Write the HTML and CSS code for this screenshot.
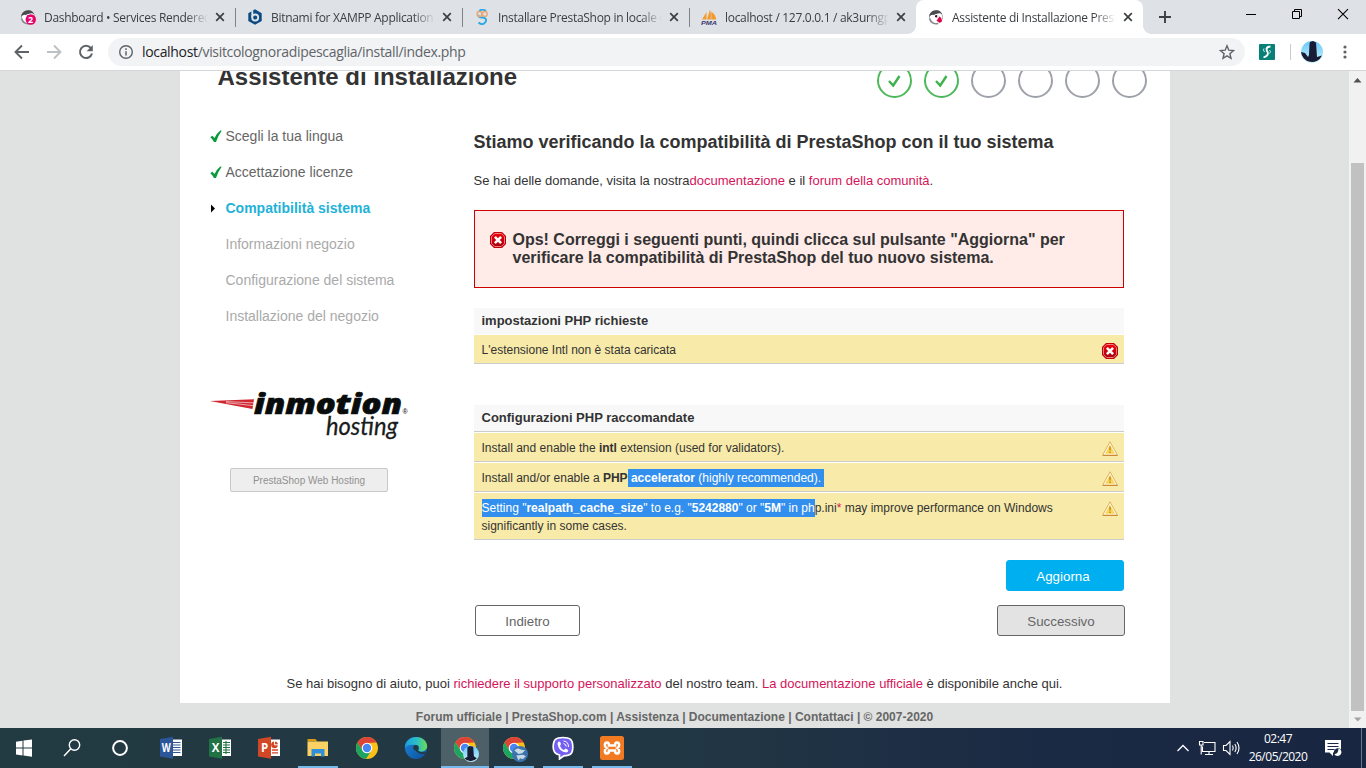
FILE: index.html
```html
<!DOCTYPE html>
<html lang="it">
<head>
<meta charset="utf-8">
<title>Assistente di Installazione PrestaShop</title>
<link rel="stylesheet" href="styles.css">
</head>
<body>
<svg width="0" height="0" class="defs">
  <defs>
    <linearGradient id="redg" x1="0" y1="0" x2="0" y2="1"><stop offset="0" stop-color="#f00008"/><stop offset="1" stop-color="#a80010"/></linearGradient>
    <linearGradient id="edgeA" x1="0" y1="0" x2="1" y2="0"><stop offset="0" stop-color="#1b9de2"/><stop offset=".55" stop-color="#2cc0c4"/><stop offset="1" stop-color="#6ddc54"/></linearGradient>
    <linearGradient id="edgeB" x1="0" y1="0" x2="1" y2="1"><stop offset="0" stop-color="#1c86d8"/><stop offset="1" stop-color="#0c4f9c"/></linearGradient>
    <linearGradient id="sky" x1="0" y1="0" x2="0" y2="1"><stop offset="0" stop-color="#6cc8f8"/><stop offset="1" stop-color="#c4f0fa"/></linearGradient>
    <symbol id="err" viewBox="0 0 16 16">
      <path d="M4 0h8l4 4v8l-4 4H4l-4-4V4z" fill="#c4000c"/>
      <path d="M4.700 1.500h6.600l3.200 3.200v6.600l-3.200 3.200H4.700l-3.200-3.200V4.700z" fill="url(#redg)" stroke="#f0a0a0" stroke-width=".8"/>
      <path d="M4.900 4.900l6.200 6.200M11.100 4.900l-6.200 6.200" stroke="#fff" stroke-width="2.600"/>
    </symbol>
    <symbol id="warn" viewBox="0 0 16 16">
      <path d="M8 1.800L15.500 15.300H.5z" fill="#fff8e0" stroke="#e0aa50" stroke-width=".9" stroke-linejoin="round"/>
      <path d="M8 4.800l4.900 8.900H3.100z" fill="#f6d758"/>
      <path d="M.8 15.400h14.700" stroke="#cc8830" stroke-width="1.100"/>
      <path d="M8 6.500v4M8 11.500v1.500" stroke="#d0952a" stroke-width="1.700"/>
    </symbol>
    <symbol id="chrome" viewBox="0 0 24 24">
      <circle cx="12" cy="12" r="11" fill="#fbc116"/>
      <path d="M2.470 6.500A11 11 0 0 1 21.530 6.500L12 7 7.670 14.500z" fill="#dc4437"/>
      <path d="M2.470 6.500A11 11 0 0 0 11 22.950L16.330 14.500 12 17 7.670 14.500z" fill="#1da462"/>
      <circle cx="12" cy="12" r="5.300" fill="#fff"/><circle cx="12" cy="12" r="4.200" fill="#4687f4"/>
    </symbol>
    <symbol id="puffin" viewBox="0 0 16 16">
      <circle cx="8" cy="8" r="6.600" fill="#fff" stroke="#a0a4a6" stroke-width=".8"/>
      <path d="M1.200 8A6.800 6.800 0 0 1 14.300 5.500C12 3.500 9 4 7 6.500 5 5 3 5.500 1.200 8z" fill="#4b4b50"/>
      <path d="M1.500 9.500A6.800 6.800 0 0 0 10 14.500" stroke="#85898c" stroke-width="1.500" fill="none"/>
      <circle cx="8" cy="7" r="2" fill="#fff"/><circle cx="8.200" cy="7.200" r="1.200" fill="#222"/>
      <path d="M9.500 6.200l3.600 2.500 1 3.500-2.200 1.500-3.500-2 1.500-1.600z" fill="#df0048"/><path d="M9 6.200l2.500 1.500-1.500 1.800z" fill="#fff"/>
    </symbol>
    <symbol id="x" viewBox="0 0 16 16"><path d="M4.200 4.200l7.600 7.600M11.800 4.200l-7.600 7.600" stroke="#3c4043" stroke-width="1.700"/></symbol>
    <symbol id="check" viewBox="0 0 12 13"><path d="M0.300 7.300L2.300 5.700 4.500 8Q7 3 10.300 .5L11.700 .8Q8.500 5 6 12H4Q2.500 9 .300 7.300z" fill="#0a9a3c"/></symbol>
  </defs>
</svg>

<header class="tabstrip">
  <div class="tab">
    <svg class="fav" viewBox="0 0 16 16"><use href="#puffin"/><circle cx="10.800" cy="10.500" r="5.200" fill="#e8006c"/><text x="8" y="14" class="badge">2</text></svg>
    <span class="title">Dashboard • Services Rendered</span><svg class="close"><use href="#x"/></svg>
  </div>
  <div class="tab sep">
    <svg class="fav" viewBox="0 0 16 16"><path d="M8 .3l6.700 3.900v7.800L8 15.700 1.300 12V4.200z" fill="#0c4a82"/><path d="M5.300 1.500V8.500" stroke="#dee1e6" stroke-width="1.900"/><circle cx="8.200" cy="8.500" r="3" fill="#0c4a82" stroke="#dee1e6" stroke-width="1.900"/></svg>
    <span class="title">Bitnami for XAMPP Applications</span><svg class="close"><use href="#x"/></svg>
  </div>
  <div class="tab sep">
    <svg class="fav" viewBox="0 0 16 16" fill="none"><path d="M12 2Q8-1 5 2.500M4 6q1 3 5 2.500 4.500 1 2.500 4.500-3 4-7 .5" stroke="#2aa8e2" stroke-width="1.900"/><circle cx="5.500" cy="5" r="2.400" stroke="#e8a878" stroke-width="1.500"/><circle cx="10.800" cy="5" r="2.400" stroke="#e8a878" stroke-width="1.500"/></svg>
    <span class="title">Installare PrestaShop in locale con</span><svg class="close"><use href="#x"/></svg>
  </div>
  <div class="tab sep">
    <svg class="fav" viewBox="0 0 16 16"><path d="M1 10.500L5.500 3v7.500zM6 10.500L9 .5Q10.500 5 9.800 10.500zM10.300 10.500V2.500q4.200 3 5 8z" fill="#f39a2c"/><text x="0" y="15.500" class="pma" textLength="16" lengthAdjust="spacingAndGlyphs">PMA</text></svg>
    <span class="title">localhost / 127.0.0.1 / ak3urngpx</span><svg class="close"><use href="#x"/></svg>
  </div>
  <div class="tab active">
    <svg class="fav"><use href="#puffin"/></svg>
    <span class="title">Assistente di Installazione PrestaShop</span><svg class="close"><use href="#x"/></svg>
  </div>
  <svg class="newtab" viewBox="0 0 16 16"><path d="M8 2v12M2 8h12" stroke="#3c4043" stroke-width="1.900"/></svg>
  <div class="winbtns">
    <svg viewBox="0 0 46 28"><path d="M18 14.500h10" stroke="#000"/></svg>
    <svg viewBox="0 0 46 28" fill="none" stroke="#000"><path d="M18.500 11.500h7v7h-7zM20.500 11.500v-2h7v7h-2"/></svg>
    <svg viewBox="0 0 46 28"><path d="M18 9.200l10 10M28 9.200l-10 10" stroke="#000" stroke-width="1.100"/></svg>
  </div>
</header>

<nav class="toolbar">
  <svg class="nav" viewBox="0 0 32 32" fill="none" stroke="#5f6368" stroke-width="1.900"><path d="M23 16H10M16 9.500L9.500 16l6.500 6.500"/></svg>
  <svg class="nav" viewBox="0 0 32 32" fill="none" stroke="#bdc1c6" stroke-width="1.900"><path d="M9 16h13M16 9.500l6.500 6.500-6.500 6.500"/></svg>
  <svg class="nav" viewBox="0 0 32 32"><path d="M20.800 12A6.100 6.100 0 1 0 22 17.500" fill="none" stroke="#5f6368" stroke-width="2"/><path d="M22.800 9v6.200h-6.200z" fill="#5f6368"/></svg>
  <div class="omni">
    <svg class="info" viewBox="0 0 16 16" fill="none" stroke="#5f6368"><circle cx="8" cy="8" r="6.300" stroke-width="1.400"/><path d="M8 7.200v4.300M8 4.200v1.700" stroke-width="1.500"/></svg>
    <span class="url"><b>localhost</b>/visitcolognoradipescaglia/install/index.php</span>
    <svg class="star" viewBox="0 0 16 16"><path d="M8 1.800l1.800 4.400 4.700.4-3.600 3.100 1.100 4.600-4-2.500-4 2.500 1.100-4.600L1.500 6.600l4.700-.4z" fill="none" stroke="#5f6368" stroke-width="1.400"/></svg>
  </div>
  <svg class="ext" viewBox="0 0 16 16"><rect width="16" height="16" rx="1" fill="#078076"/><path d="M11.500 2.500Q8 2.500 7.500 5q0 1.500 1.300 3.500 1 3-4.300 5" fill="none" stroke="#fff" stroke-width="1.800"/><path d="M5 4.500q-1.500 1 .5 3.500M10.500 6q2 1.500 0 3.500" stroke="#cfe9e5" fill="none"/></svg>
  <i class="vsep"></i>
  <svg class="avatar" viewBox="0 0 22 22"><circle cx="11" cy="11" r="11" fill="url(#sky)"/><path d="M8.500 3l.5-2 3-1 3 1.500 1 14.500 5-1.500A11 11 0 0 1 0 11l4 1 3 4 1-2z" fill="#181c34"/></svg>
  <svg class="dots" viewBox="0 0 16 16" fill="#5f6368"><circle cx="8" cy="3" r="1.600"/><circle cx="8" cy="8" r="1.600"/><circle cx="8" cy="13" r="1.600"/></svg>
</nav>

<div class="viewport">
  <div class="page">
    <div class="sheet">
      <div class="head">
        <h1>Assistente di installazione</h1>
        <div class="steps">
          <i class="done"><svg viewBox="0 0 35 35"><path d="M12 18l4.200 4.500L22.500 13" fill="none" stroke="#3fb24f" stroke-width="2.400"/></svg></i>
          <i class="done"><svg viewBox="0 0 35 35"><path d="M12 18l4.200 4.500L22.500 13" fill="none" stroke="#3fb24f" stroke-width="2.400"/></svg></i>
          <i></i><i></i><i></i><i></i>
        </div>
      </div>
      <div class="cols">
        <aside>
          <ol>
            <li><svg><use href="#check"/></svg><span>Scegli la tua lingua</span></li>
            <li><svg><use href="#check"/></svg><span>Accettazione licenze</span></li>
            <li class="current"><svg viewBox="0 0 12 13"><path d="M1 2.500v8l4-4z"/></svg><span>Compatibilità sistema</span></li>
            <li class="todo"><span>Informazioni negozio</span></li>
            <li class="todo"><span>Configurazione del sistema</span></li>
            <li class="todo"><span>Installazione del negozio</span></li>
          </ol>
          <svg class="logo" viewBox="0 0 200 56">
            <path d="M0 13L44 11.300 42.500 21z" fill="#cf2630"/><path d="M16 13.600l28 1.300M16 14.700l28 3" stroke="#fff" stroke-width=".6"/>
            <text x="44" y="26" class="inmo" textLength="148" lengthAdjust="spacingAndGlyphs">inmotion</text>
            <text x="116" y="47" class="host" textLength="72" lengthAdjust="spacingAndGlyphs">hosting</text>
            <text x="192.500" y="26" class="reg">®</text>
          </svg>
          <a class="hostbtn">PrestaShop Web Hosting</a>
        </aside>
        <main>
          <h2>Stiamo verificando la compatibilità di PrestaShop con il tuo sistema</h2>
          <p class="intro">Se hai delle domande, visita la nostra<a>documentazione</a> e il <a>forum della comunità</a>.</p>
          <div class="error"><svg><use href="#err"/></svg><p>Ops! Correggi i seguenti punti, quindi clicca sul pulsante "Aggiorna" per<br>verificare la compatibilità di PrestaShop del tuo nuovo sistema.</p></div>
          <h3 class="first">impostazioni PHP richieste</h3>
          <div class="row last"><span>L'estensione Intl non è stata caricata</span><svg><use href="#err"/></svg></div>
          <h3 class="lined">Configurazioni PHP raccomandate</h3>
          <div class="row"><span>Install and enable the <b>intl</b> extension (used for validators).</span><svg><use href="#warn"/></svg></div>
          <div class="row"><span>Install and/or enable a <b>PHP</b><mark><b>&nbsp;accelerator</b> (highly recommended).</mark></span><svg><use href="#warn"/></svg></div>
          <div class="row tall"><span><mark>Setting "<b>realpath_cache_size</b>" to e.g. "<b>5242880</b>" or "<b>5M</b>" in ph</mark>p.ini<a>*</a> may improve performance on Windows<br>significantly in some cases.</span><svg><use href="#warn"/></svg></div>
          <div class="refresh"><button class="blue">Aggiorna</button></div>
          <div class="pager"><button class="back">Indietro</button><button class="next">Successivo</button></div>
        </main>
      </div>
      <p class="help">Se hai bisogno di aiuto, puoi <a>richiedere il supporto personalizzato</a> del nostro team. <a>La documentazione ufficiale</a> è disponibile anche qui.</p>
    </div>
    <footer>Forum ufficiale | PrestaShop.com | Assistenza | Documentazione | Contattaci | © 2007-2020</footer>
  </div>
  <div class="scroll">
    <svg viewBox="0 0 17 17"><path d="M4.500 11.500h8L8.500 7z" fill="#505050"/></svg>
    <i></i>
    <svg viewBox="0 0 17 17"><path d="M5 6.500h7.500l-3.700 4z" fill="#a3a3a3"/></svg>
  </div>
</div>

<div class="taskbar">
  <div class="cell"><svg viewBox="0 0 24 24" fill="#fff"><path d="M4 5.700l6.500-1v6.800H4zM11.500 4.500L20 3.500v8h-8.500zM4 12.500h6.500v6.900L4 18.500zM11.500 12.500H20v8.200l-8.500-1.200z"/></svg></div>
  <div class="cell"><svg viewBox="0 0 24 24" fill="none" stroke="#fff" stroke-width="1.400"><circle cx="14.500" cy="9" r="5.200"/><path d="M10.800 12.800L4 20"/></svg></div>
  <div class="cell cortana"><svg viewBox="0 0 24 24" fill="none" stroke="#fff" stroke-width="2"><circle cx="12" cy="12" r="6.900"/></svg></div>
  <div class="cell"><svg viewBox="0 0 24 24"><path d="M12 3.500h11v16.500H12z" fill="#fff"/><path d="M14 6.500h7.500M14 9h7.500M14 11.500h7.500M14 14h7.500M14 16.500h7.500" stroke="#2b579a" stroke-width="1.100"/><path d="M1 3L14 .8v22L1 20.600z" fill="#2b579a"/><text x="2.800" y="15.500" class="office" textLength="9" lengthAdjust="spacingAndGlyphs">W</text></svg></div>
  <div class="cell"><svg viewBox="0 0 24 24"><path d="M12 3.500h11v16.500H12z" fill="#fff"/><path d="M15 6.500h7M15 9h7M15 11.500h7M15 14h7M15 16.500h7M18 5v13" stroke="#217346" stroke-width="1.100"/><path d="M1 3L14 .8v22L1 20.600z" fill="#217346"/><text x="3.800" y="15.500" class="office">X</text></svg></div>
  <div class="cell"><svg viewBox="0 0 24 24"><path d="M12 3.500h11v16.500H12z" fill="#fff"/><path d="M15 14h6M15 16.800h6" stroke="#d24726" stroke-width="1.300"/><circle cx="17.500" cy="8.800" r="3.400" fill="#d24726"/><path d="M17.500 8.800V5M17.500 8.800H21" stroke="#fff"/><path d="M1 3L14 .8v22L1 20.600z" fill="#d24726"/><text x="4" y="15.500" class="office">P</text></svg></div>
  <div class="cell run"><svg viewBox="0 0 24 24"><path d="M1.500 3h8l2 2.500h-10z" fill="#d89a10"/><path d="M1.500 5.500h20.500V20H1.500z" fill="#fbd163"/><path d="M5.500 13h13v7.500h-3.500v-3h-6v3H5.500z" fill="#2f8fdb"/></svg></div>
  <div class="cell"><svg><use href="#chrome"/></svg></div>
  <div class="cell"><svg viewBox="0 0 24 24"><circle cx="12" cy="12" r="11" fill="url(#edgeB)"/><path d="M.8 12C1 4.500 6.500 1 12 1c7 0 11.500 5 11.200 9.800-.4 4-5 6-9 4.200 2-2.500.8-5.500-2-6-5-.6-9.400-.5-11.400 3z" fill="url(#edgeA)"/><path d="M12 13.500q2.500 4.300 9.500 3.500" stroke="#223942" stroke-width="1.800" fill="none"/><circle cx="11.800" cy="11.700" r="2.600" fill="#223942"/></svg></div>
  <div class="cell run on"><svg viewBox="0 0 24 24"><use href="#chrome"/></svg><svg class="mini" viewBox="0 0 22 22"><circle cx="11" cy="11" r="11" fill="url(#sky)"/><path d="M6 2l3-2 5 1 1 13 4 3A11 11 0 0 1 2 17l4-2z" fill="#181c34"/></svg></div>
  <div class="cell run"><svg viewBox="0 0 24 24"><use href="#chrome"/></svg><svg class="mini" viewBox="0 0 22 22"><circle cx="11" cy="11" r="11" fill="#3d73ad"/><path d="M3 6l5-3 5 2 5 1-4 4-5 1zM6 13l9-1 4 2-4 4-4-1-2 3z" fill="#c8d9e6"/></svg></div>
  <div class="cell run"><svg viewBox="0 0 24 24"><path d="M12 1.500c7 0 9.800 2 9.800 9.500s-3 8.800-9 8.800L8.500 23v-4C4 18 2.200 16 2.200 11 2.200 3.500 5 1.500 12 1.500z" fill="#7360f2" stroke="#fff" stroke-width="1.700"/><path d="M7 6q2-1.500 3 2l-1 2q1 3 4 4l1.500-1.500q5 2 1 4Q8 16 6.500 8z" fill="#fff"/><path d="M12.500 5q5 .5 5 6M12.500 7.500q2.500.5 2.700 3" stroke="#fff" fill="none"/></svg></div>
  <div class="cell run"><svg viewBox="0 0 24 24"><rect width="24" height="24" rx="2.500" fill="#f17a23"/><path d="M7 6.500c-2.500 0-3 4-.5 5.500-2.500 1.500-2 5.500.5 5.500 1.500 0 2-1 2-3h6c0 2 .5 3 2 3 2.500 0 3-4 .5-5.500 2.500-1.500 2-5.500-.5-5.500-1.500 0-2 1-2 3H9c0-2-.5-3-2-3z" fill="none" stroke="#fff" stroke-width="2.600"/></svg></div>
  <div class="tray">
    <svg viewBox="0 0 24 24" fill="none" stroke="#fff" stroke-width="1.300"><path d="M6.500 15l5.500-5.500 5.500 5.500"/></svg>
    <svg viewBox="0 0 24 24" fill="none" stroke="#fff" stroke-width="1.100"><path d="M9 6.500h11v9H7.500v-5M14 15.500v3M10 18.500h8M4.500 5.500h3.500v3.500H4.500zM6.200 9v9.500"/></svg>
    <svg viewBox="0 0 24 24" fill="none" stroke="#fff" stroke-width="1.100"><path d="M4.500 9.500h2.500l4-4v13l-4-4H4.500zM13.500 9.500q1.500 2.500 0 5M15.800 8q2.700 4 0 8M18 6q4 6 0 12"/></svg>
    <div class="clock"><span>02:47</span><span>26/05/2020</span></div>
    <svg class="note" viewBox="0 0 24 24"><path d="M4 4h16v12.500h-8V20l-3.500-3.500H4z" fill="#fff"/><path d="M6.500 7.500h11M6.500 10.500h11M6.500 13.500h7" stroke="#1b2a44" stroke-width="1.200"/><circle cx="17" cy="16.500" r="4.200" fill="#1b2a44"/><path d="M17.500 12.500a3.800 3.800 0 1 1-4.200 5.500q4 0 4.200-5.500z" fill="#fff"/></svg>
    <i class="desk"></i>
  </div>
</div>
</body>
</html>
```
FILE: styles.css
```css
* { box-sizing: border-box; margin: 0; padding: 0; }
body { width: 1366px; height: 768px; overflow: hidden; display: flex; flex-direction: column; font-family: "Liberation Sans", Arial, sans-serif; color: #333; background: #fff; }
svg { display: block; flex: none; }
.defs { position: absolute; }

/* browser chrome */
.tabstrip { height: 34px; flex: none; background: #dee1e6; display: flex; padding-left: 8px; font: 12px "Open Sans", "Noto Sans", sans-serif; }
.tab { width: 227px; display: flex; align-items: center; padding-left: 12px; position: relative; }
.tab.sep::before { content: ""; position: absolute; left: 0; top: 8px; width: 1px; height: 19px; background: #808488; }
.tab.active { background: #fff; border-radius: 8px 8px 0 0; }
.tab.active::before, .tab.active::after { content: ""; position: absolute; bottom: 0; width: 8px; height: 8px; }
.tab.active::before { left: -8px; background: radial-gradient(circle at 0 0, transparent 7.5px, #fff 8px); }
.tab.active::after { right: -8px; background: radial-gradient(circle at 100% 0, transparent 7.5px, #fff 8px); }
.fav { width: 16px; height: 16px; margin-right: 8px; }
.title { width: 164px; overflow: hidden; white-space: nowrap; color: #3c4043; letter-spacing: -.3px; -webkit-mask-image: linear-gradient(90deg, #000 142px, transparent 164px); }
.close { width: 16px; height: 16px; margin-left: 4px; }
.badge { font: bold 9px "Open Sans", sans-serif; fill: #fff; }
.pma { font: italic bold 6px "Liberation Sans", sans-serif; fill: #393a6c; }
.newtab { width: 16px; height: 16px; margin: 9px 0 0 14px; }
.winbtns { display: flex; margin-left: auto; }
.winbtns svg { width: 46px; height: 28px; }
.toolbar { height: 37px; flex: none; display: flex; align-items: center; padding: 0 0 1px 6px; border-bottom: 1px solid #d5d7db; background: #fff; }
.nav { width: 32px; height: 32px; }
.omni { width: 1137px; height: 28px; margin-left: 6px; border-radius: 14px; background: #f1f3f4; display: flex; align-items: center; padding: 0 10px; }
.info { width: 16px; height: 16px; }
.url { flex: 1; margin-left: 8px; font: 14px "Open Sans", "Noto Sans", sans-serif; letter-spacing: -.33px; color: #5f6368; }
.url b { font-weight: 400; color: #202124; }
.star { width: 16px; height: 16px; }
.ext { width: 16px; height: 16px; margin-left: 14px; }
.vsep { width: 1px; height: 16px; background: #c8cacd; margin-left: 15px; }
.avatar { width: 22px; height: 22px; margin-left: 10px; }
.dots { width: 16px; height: 16px; margin-left: 14px; }

/* page */
.viewport { flex: 1; min-height: 0; display: flex; overflow: hidden; }
.page { flex: 1; background: #e0e2e1; padding-left: 180px; }
.sheet { width: 990px; height: 632px; background: #fff; display: flex; flex-direction: column; }
.head { display: flex; justify-content: space-between; height: 28px; margin-bottom: 19px; padding: 0 23px 0 37.5px; }
h1 { font-size: 24px; line-height: 28px; margin-top: -8px; white-space: nowrap; letter-spacing: -.02px; }
.steps { display: flex; gap: 12px; margin-top: -8px; }
.steps i { width: 35px; height: 35px; border: 2px solid #9da1a8; border-radius: 50%; }
.steps .done { border-color: #4cb85a; }
.steps svg { width: 35px; height: 35px; margin: -2px; }
.cols { display: flex; flex: 1; }
aside { width: 294px; padding-left: 30px; }
aside ol { list-style: none; }
aside li { height: 36px; line-height: 36px; font-size: 14px; color: #666; display: flex; align-items: center; white-space: nowrap; }
aside li svg { width: 12px; height: 13px; margin-right: 3.500px; }
aside li.current { color: #1fb2d8; font-weight: bold; }
.current path { fill: #000; }
aside li.todo { padding-left: 15.500px; color: #aaa; }
.logo { width: 200px; height: 56px; margin-top: 54px; }
.inmo { font: italic 800 29px "Open Sans", sans-serif; fill: #080c0c; stroke: #080c0c; stroke-width: .7; }
.host { font: italic 400 26px Lato, sans-serif; fill: #181c1c; stroke: #181c1c; stroke-width: .3; }
.reg { font: 7px "Liberation Sans", sans-serif; }
.hostbtn { display: flex; align-items: center; justify-content: center; width: 158px; height: 24px; margin: 24px 0 0 20px; border: 1px solid #c8c8c8; border-radius: 2px; background: #eee; color: #919191; font-size: 10px; }
main { width: 650px; }
main a, .help a { color: #d4145a; }
h2 { font-size: 18px; line-height: 24px; margin: 12px 0 0 -.5px; white-space: nowrap; }
.intro { font-size: 13px; line-height: 18px; margin: 18px 0 0 -.5px; white-space: nowrap; }
.error { display: flex; height: 78px; margin-top: 20px; padding: 20px 0 0 15px; border: 1px solid #c00; background: #ffebe8; font-size: 16px; line-height: 18px; font-weight: bold; white-space: nowrap; }
.error svg { width: 16px; height: 16px; margin: 1px 6.500px 0 0; }
.error p { letter-spacing: -.01px; }
h3 { background: #f8f8f8; font-size: 13px; line-height: 26px; height: 26px; padding-left: 7.500px; }
h3.first { margin: 20px 0 1px; }
h3.lined { height: 27px; border-bottom: 1px solid #ccc; margin: 41px 0 1px; }
.row { height: 29px; margin-bottom: 1px; padding: 6px 6px 0 7.500px; display: flex; justify-content: space-between; background: #f8eaa8; border-bottom: 1px solid #ccc; font-size: 12px; line-height: 18px; white-space: nowrap; }
.row.last { margin: 0; }
.row.tall { height: 47px; margin-bottom: 0; }
.row svg { width: 16px; height: 16px; margin-top: 2px; }
.row:not(.last) svg { margin-top: 1px; }
mark { background: #328fee; color: #fff; display: inline-block; }
.row:not(.tall) mark { padding-right: 3px; }
button { height: 31px; font: 13.333px "Liberation Sans", Arial, sans-serif; border-radius: 3px; border: 1px solid #666; padding-top: 1px; }
.refresh { display: flex; justify-content: flex-end; margin-top: 20px; }
.blue { width: 118px; background: #00aff0; border-color: #00aff0; color: #fff; padding-right: 4px; }
.pager { display: flex; justify-content: space-between; margin: 14px -1px 0 1px; }
.back { width: 105px; background: #fff; color: #666; }
.next { width: 128px; background: #e3e3e3; color: #666; }
.help { height: 39px; line-height: 39px; font-size: 13px; margin-right: 1px; text-align: center; white-space: nowrap; }
footer { text-align: center; width: 989px; font-size: 12px; font-weight: bold; color: #666; line-height: 28px; }
.scroll { width: 17px; background: #f1f1f1; display: flex; flex-direction: column; }
.scroll i { width: 13px; height: 548px; margin: 75px 0 0 2px; background: #c1c1c1; }
.scroll svg { width: 17px; height: 17px; }

/* taskbar */
.taskbar { height: 40px; flex: none; display: flex; background: linear-gradient(90deg, #223a42, #223744 50%, #1a2944 78%, #192641); }
.cell { width: 48px; height: 40px; display: flex; align-items: center; justify-content: center; margin-right: 1px; position: relative; }
.cell:nth-child(-n+2) { margin-right: 0; }
.cell.cortana { margin-right: 3px; }
.cell svg { width: 24px; height: 24px; }
.cell .mini { position: absolute; width: 16px; height: 16px; left: 22px; top: 18px; }
.run::after { content: ""; position: absolute; left: 4px; right: 4px; bottom: 0; height: 2px; background: #76b9ed; }
.on { background: #4d5f67; }
.on::after { left: 0; right: 0; }
.office { font: bold 11.5px "Open Sans", sans-serif; fill: #fff; }
.tray { display: flex; align-items: center; margin-left: auto; color: #fff; }
.tray svg { width: 24px; height: 24px; }
.clock { width: 70px; display: flex; flex-direction: column; align-items: center; font: 12px/18px "Open Sans", sans-serif; letter-spacing: -.5px; }
.note { margin-left: 8px; margin-right: 16px; }
.desk { width: 1px; height: 40px; background: #6a7488; margin-right: 4px; }
```
